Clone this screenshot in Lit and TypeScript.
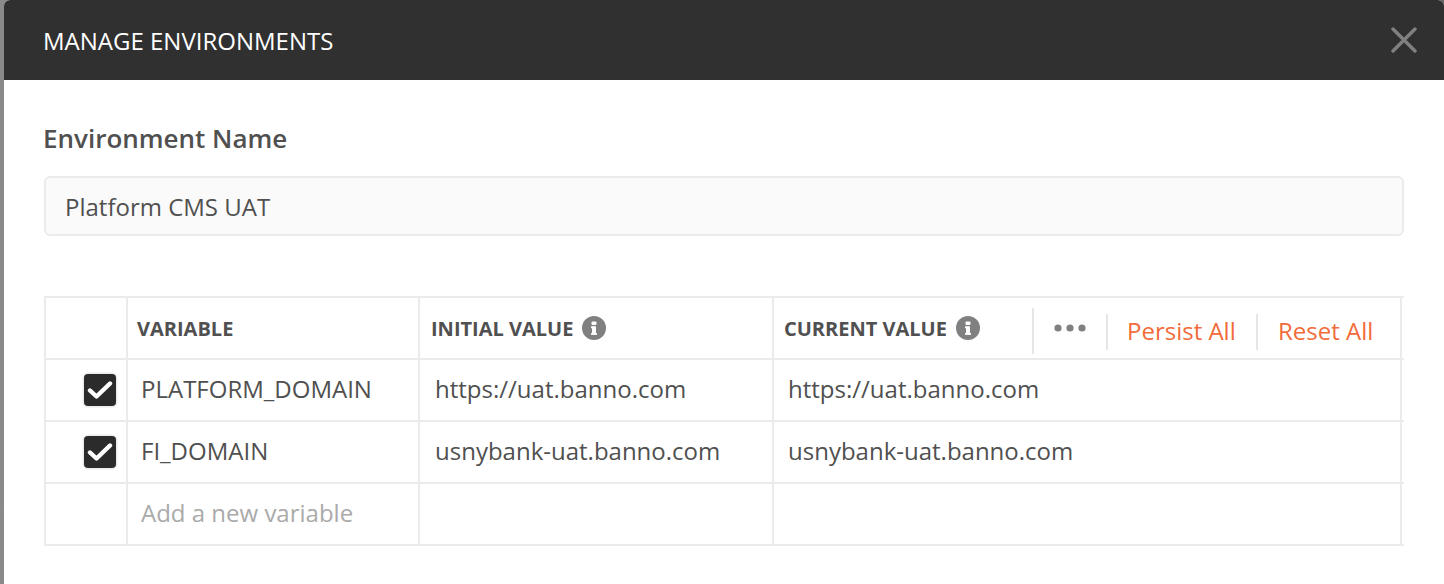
import { LitElement, css, html } from 'lit';
import { customElement } from 'lit/decorators.js';

const rows = [
  { name: 'PLATFORM_DOMAIN', initial: 'https://uat.banno.com', current: 'https://uat.banno.com' },
  { name: 'FI_DOMAIN', initial: 'usnybank-uat.banno.com', current: 'usnybank-uat.banno.com' },
];

const infoIcon = html`
  <svg class="info" width="24" height="24" viewBox="0 0 24 24">
    <circle cx="12" cy="12" r="12" fill="#808080" />
    <rect x="9.5" y="5.5" width="5" height="3.6" rx="1" fill="#fff" />
    <rect x="10" y="10.4" width="4" height="8.4" fill="#fff" />
    <rect x="9" y="10.4" width="4" height="1.8" fill="#fff" />
    <rect x="9" y="17" width="6" height="1.8" fill="#fff" />
  </svg>
`;

const checkIcon = html`
  <span class="check">
    <svg width="26" height="22" viewBox="0 0 26 22">
      <path d="M3 11.5 L9.5 17.5 L23 4.5" fill="none" stroke="#fff" stroke-width="4.4" stroke-linecap="round" stroke-linejoin="round" />
    </svg>
  </span>
`;

@customElement('app-root')
export class AppRoot extends LitElement {
  static get styles() {
    return css`
:host {
  display: block;
  width: 1444px;
  height: 584px;
  overflow: hidden;
  background: linear-gradient(to right, #8a8a8a, #666);
  font-family: "Open Sans", sans-serif;
}
.modal {
  margin-left: 4px;
  height: 584px;
  background: #fff;
  border-radius: 6px 6px 0 0;
  overflow: hidden;
}
.header {
  height: 80px;
  background: #303030;
  display: flex;
  align-items: center;
  justify-content: space-between;
  padding: 0 27px 0 39px;
  color: #fff;
  font-size: 24px;
}
.close {
  display: block;
}
.body {
  padding: 40px 40px 0;
}
.label {
  font-size: 26px;
  line-height: 36px;
  font-weight: 600;
  color: #505050;
  margin-left: -1px;
}
.name-input {
  margin-top: 20px;
  box-sizing: border-box;
  height: 60px;
  background: #fafafa;
  border: 2px solid #ebebeb;
  border-radius: 6px;
  padding: 0 19px;
  display: flex;
  align-items: center;
  font-size: 24px;
  color: #505050;
}
.table {
  margin-top: 60px;
  border-top: 2px solid #ebebeb;
  font-size: 24px;
  color: #505050;
}
.row {
  display: grid;
  grid-template-columns: 84px 292px 354px 628px;
  height: 62px;
  box-sizing: border-box;
  border-bottom: 2px solid #ebebeb;
}
.cell {
  border-right: 2px solid #ebebeb;
  display: flex;
  align-items: center;
  padding-left: 13px;
  padding-bottom: 4px;
  white-space: nowrap;
}
.cell:first-child {
  border-left: 2px solid #ebebeb;
  justify-content: flex-end;
  padding: 0 10px 0 0;
}
.head .cell {
  font-size: 20px;
  font-weight: 700;
  padding-left: 9px;
  padding-bottom: 0;
}
.head .cell:first-child {
  padding: 0;
}
.head .initial {
  padding-left: 11px;
}
.head .current {
  padding-left: 10px;
}
.info {
  margin-left: 9px;
  flex: none;
}
.title-wrap {
  display: flex;
  align-items: center;
  width: 248px;
  height: 100%;
  box-sizing: border-box;
}
.actions {
  display: flex;
  align-items: center;
  height: 100%;
  font-size: 24px;
  font-weight: 400;
  color: #f26b3a;
}
.actions span {
  display: flex;
  align-items: center;
}
.dots {
  border-left: 2px solid #e6e6e6;
  height: 46px;
  width: 74px;
  box-sizing: border-box;
  justify-content: center;
  margin-top: 5px;
  padding-bottom: 5px;
}
.action {
  border-left: 2px solid #e6e6e6;
  height: 36px;
  box-sizing: border-box;
  padding-left: 20px;
  padding-bottom: 4px;
  margin-top: 8px;
}
.persist {
  width: 150px;
}
.actions .persist {
  padding-left: 19px;
}
.check {
  width: 32px;
  height: 32px;
  box-sizing: border-box;
  background: #2b2b2b;
  border-radius: 4px;
  box-shadow: 0 0 0 1.5px #ececec;
  display: flex;
  align-items: center;
  justify-content: center;
}
.initial-val {
  padding-left: 15px;
}
.current-val {
  padding-left: 14px;
}
.placeholder {
  color: #aaa;
}
    `;
  }

  render() {
    return html`
      <div class="modal">
        <div class="header">
          <span>MANAGE ENVIRONMENTS</span>
          <svg class="close" width="26" height="26" viewBox="0 0 26 26">
            <path d="M2 2 L24 24 M24 2 L2 24" stroke="#808080" stroke-width="3.4" stroke-linecap="round" />
          </svg>
        </div>
        <div class="body">
          <div class="label">Environment Name</div>
          <div class="name-input">Platform CMS UAT</div>
          <div class="table">
            <div class="row head">
              <div class="cell"></div>
              <div class="cell">VARIABLE</div>
              <div class="cell initial">INITIAL VALUE ${infoIcon}</div>
              <div class="cell current">
                <div class="title-wrap">CURRENT VALUE ${infoIcon}</div>
                <div class="actions">
                  <span class="dots">
                    <svg width="32" height="10" viewBox="0 0 32 10">
                      <circle cx="4" cy="5" r="3.6" fill="#808080" />
                      <circle cx="16" cy="5" r="3.6" fill="#808080" />
                      <circle cx="28" cy="5" r="3.6" fill="#808080" />
                    </svg>
                  </span>
                  <span class="action persist">Persist All</span>
                  <span class="action">Reset All</span>
                </div>
              </div>
            </div>
            ${rows.map(r => html`
              <div class="row">
                <div class="cell">${checkIcon}</div>
                <div class="cell">${r.name}</div>
                <div class="cell initial-val">${r.initial}</div>
                <div class="cell current-val">${r.current}</div>
              </div>
            `)}
            <div class="row">
              <div class="cell"></div>
              <div class="cell placeholder">Add a new variable</div>
              <div class="cell"></div>
              <div class="cell"></div>
            </div>
          </div>
        </div>
      </div>
    `;
  }
}
